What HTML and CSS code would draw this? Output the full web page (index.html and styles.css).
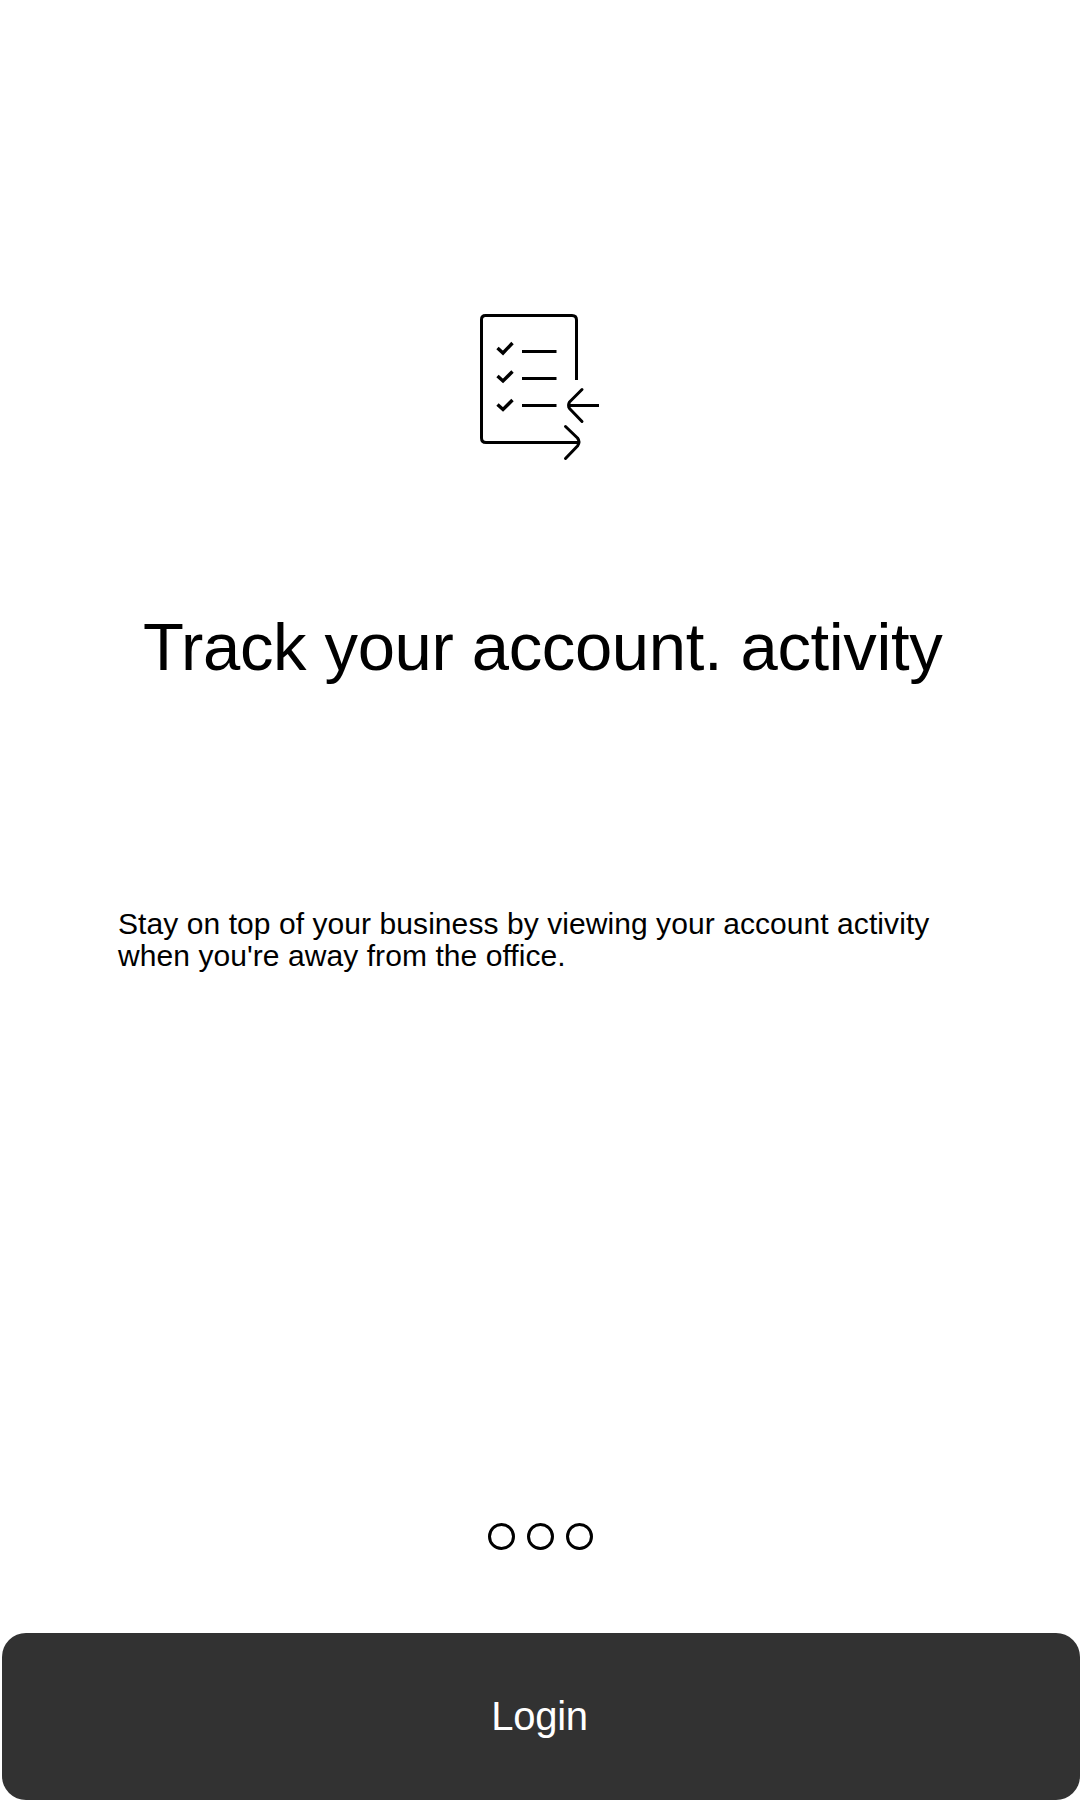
FILE: index.html
```html
<!DOCTYPE html>
<html lang="en">
<head>
<meta charset="utf-8">
<meta name="viewport" content="width=device-width">
<title>Track your account activity</title>
<link rel="stylesheet" href="styles.css">
</head>
<body>
<main class="screen">
  <svg class="icon" width="140" height="170" viewBox="0 0 140 170" fill="none" stroke="#000" stroke-width="3" stroke-linejoin="round" aria-hidden="true">
    <path d="M106.500 80V20Q106.500 15.500 102 15.500H15.500Q11.500 15.500 11.500 19.500V138Q11.500 142.500 16 142.500H109"/>
    <path d="M52 51.500H86.500M52 78.500H86.500M52 105.500H86.500M129 105.500H98"/>
    <path stroke-width="3.400" stroke-linejoin="miter" d="M27.500 48L33 53L42.500 43M27.500 76L33 81L42.500 71.500M27.500 104.500L33 109.500L42.500 100"/>
    <path stroke-linecap="round" d="M112 89.500L99.500 102Q97.500 105.500 99.500 108.500L112 121.500M95.500 126.500L107.500 138Q110.500 142 107.500 146L95.500 158.500"/>
  </svg>
  <h1 class="title">Track your account. activity</h1>
  <p class="description">Stay on top of your business by viewing your account activity<br>when you're away from the office.</p>
  <div class="dots"><span class="dot"></span><span class="dot"></span><span class="dot"></span></div>
  <button class="login" type="button">Login</button>
</main>
</body>
</html>
```
FILE: styles.css
```css
body {
  margin: 0;
  background: #fff;
  color: #000;
  font-family: "Liberation Sans", Arial, sans-serif;
}
.screen {
  box-sizing: border-box;
  height: 1800px;
  padding-top: 300px;
  display: flex;
  flex-direction: column;
  overflow: hidden;
}
.icon {
  flex: none;
  margin-left: 470px;
}
.title {
  margin: 137px 0 0 143px;
  font-size: 67px;
  font-weight: 400;
  line-height: 80px;
  letter-spacing: -0.35px;
  white-space: nowrap;
}
.description {
  margin: 221px 0 0 118px;
  font-size: 30px;
  line-height: 32px;
  letter-spacing: 0.07px;
  white-space: nowrap;
}
.dots {
  display: flex;
  gap: 12px;
  margin: 551px 0 0 488px;
}
.dot {
  box-sizing: border-box;
  width: 27px;
  height: 27px;
  border: 3px solid #000;
  border-radius: 50%;
}
.login {
  height: 167px;
  margin: auto 0 0 2px;
  padding: 0 3px 0 0;
  border: 0;
  border-radius: 24px;
  background: #323232;
  color: #fff;
  font-family: inherit;
  font-size: 40px;
  letter-spacing: -0.3px;
}
```
